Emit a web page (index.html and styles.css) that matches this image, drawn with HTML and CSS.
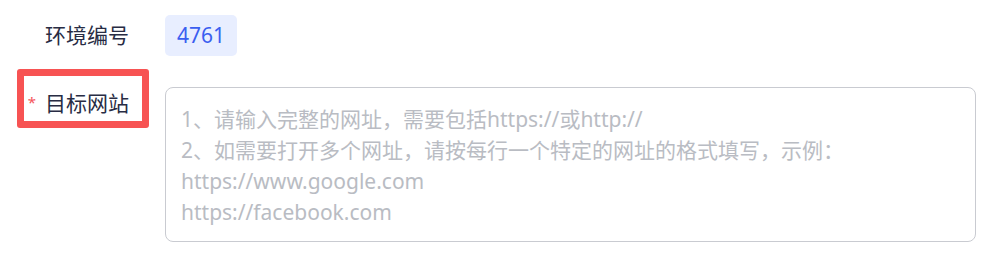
FILE: index.html
```html
<!DOCTYPE html>
<html lang="zh-CN">
<head>
<meta charset="utf-8">
<title>表单</title>
<link rel="stylesheet" href="styles.css">
</head>
<body>
<div class="form">
  <div class="row">
    <div class="label">环境编号</div>
    <div class="content"><span class="badge">4761</span></div>
  </div>
  <div class="row row-url">
    <div class="label label-top"><span class="highlight"></span><span class="req">*</span>目标网站</div>
    <div class="content">
      <textarea class="input" placeholder="1、请输入完整的网址，需要包括https://或http://&#10;2、如需要打开多个网址，请按每行一个特定的网址的格式填写，示例：&#10;https://www.google.com&#10;https://facebook.com"></textarea>
    </div>
  </div>
</div>
</body>
</html>
```

FILE: styles.css
```css
html, body {
  margin: 0;
  padding: 0;
  background: #ffffff;
}
body {
  font-family: "Noto Sans", "Noto Sans CJK SC", sans-serif;
  font-size: 21px;
  color: #282c44;
}
.form {
  padding-top: 15px;
}
.row {
  display: flex;
  align-items: flex-start;
}
.label {
  width: 165px;
  box-sizing: border-box;
  padding-right: 36px;
  text-align: right;
  line-height: 41px;
  flex-shrink: 0;
  position: relative;
}
.label-top {
  line-height: 31px;
}
.req {
  color: #f5565b;
  font-size: 15px;
  margin-right: 9px;
  vertical-align: 3px;
}
.highlight {
  position: absolute;
  left: 17px;
  top: -18px;
  width: 132px;
  height: 59px;
  box-sizing: border-box;
  border: 7px solid #f75353;
  border-radius: 3px;
}
.content {
  flex: 0 0 auto;
}
.badge {
  display: inline-block;
  height: 41px;
  line-height: 41px;
  padding: 0 12px;
  border-radius: 5px;
  background: #e8eeff;
  color: #3a5ef0;
}
.row-url {
  margin-top: 31px;
}
.input {
  display: block;
  width: 811px;
  height: 155px;
  box-sizing: border-box;
  border: 1px solid #c9cbd1;
  border-radius: 8px;
  padding: 16px 15px;
  font-family: "Noto Sans", "Noto Sans CJK SC", sans-serif;
  font-size: 21px;
  line-height: 31px;
  color: #262b40;
  resize: none;
  outline: none;
  overflow: hidden;
  background: #fff;
}
.input::placeholder {
  color: #b9bcc3;
}
```
